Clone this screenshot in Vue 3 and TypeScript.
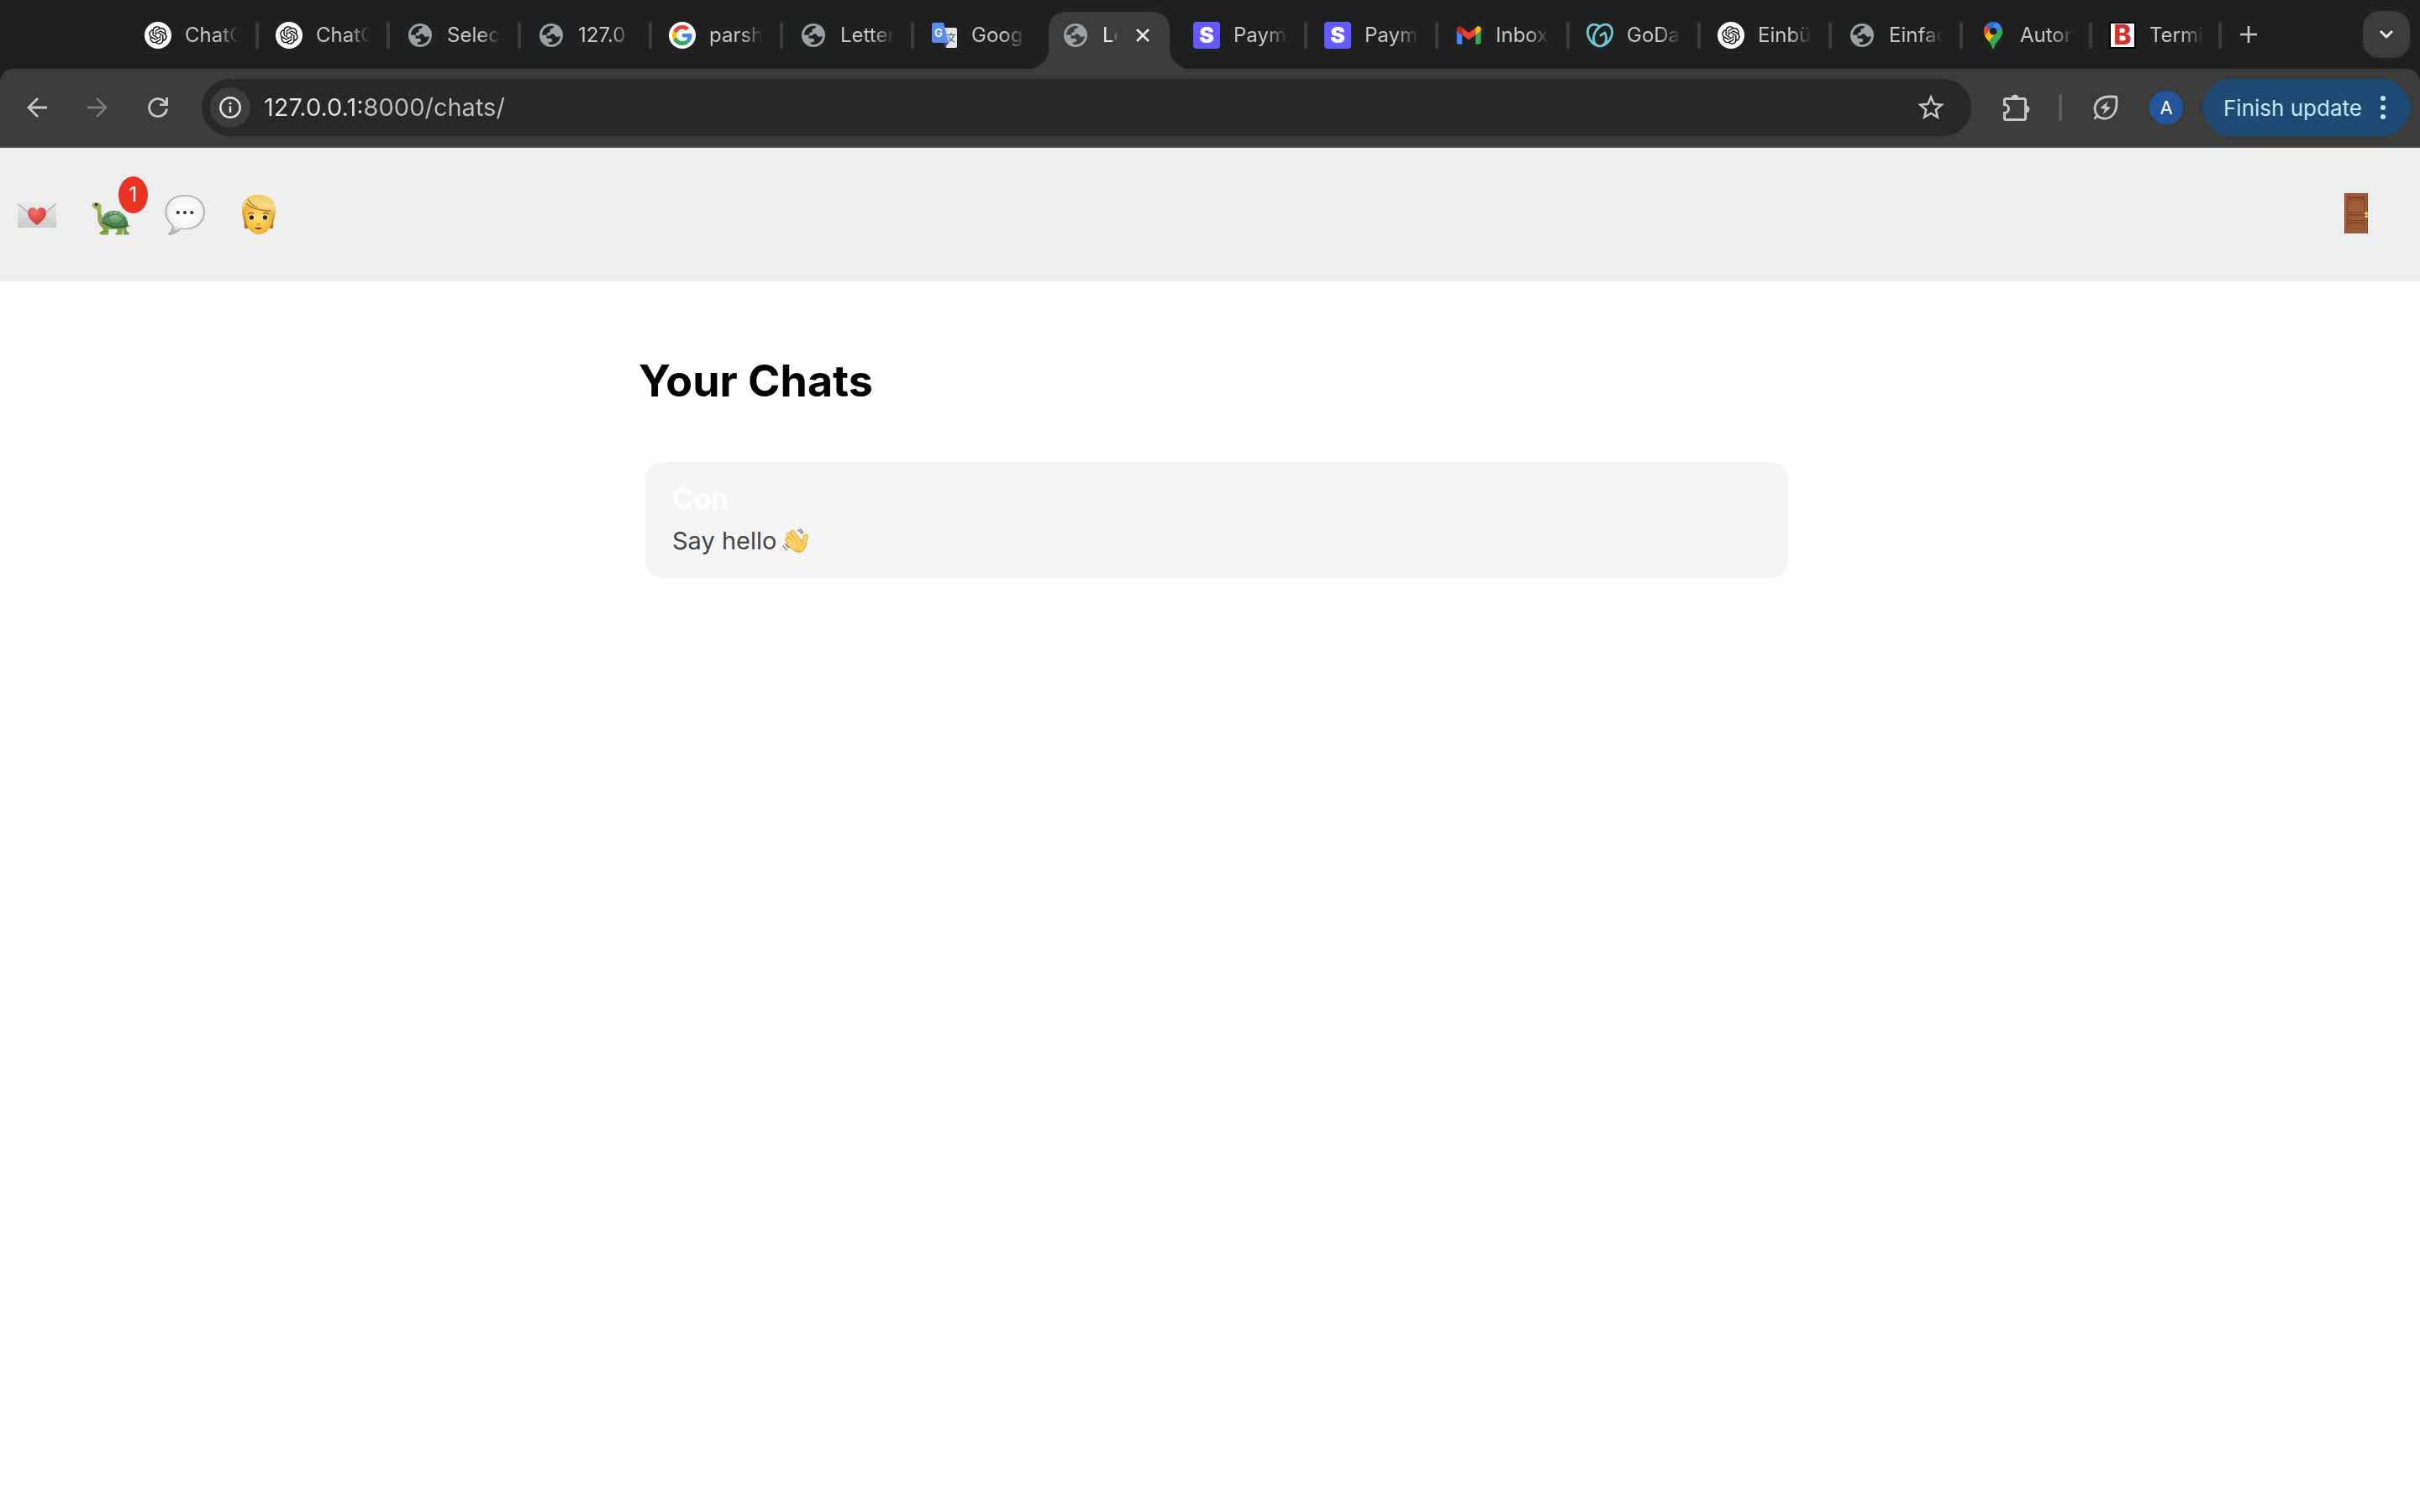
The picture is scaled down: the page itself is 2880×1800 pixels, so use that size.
<script setup lang="ts">
import { ref } from 'vue'

type IconName =
  | 'openai' | 'globe' | 'google' | 'translate' | 'stripe'
  | 'gmail' | 'godaddy' | 'maps' | 'bold'

interface Tab {
  icon: IconName
  label: string
  active?: boolean
  plain?: boolean
  narrow?: boolean
}

const tabs: Tab[] = [
  { icon: 'openai', label: 'ChatG' },
  { icon: 'openai', label: 'ChatG' },
  { icon: 'globe', label: 'Selec' },
  { icon: 'globe', label: '127.0' },
  { icon: 'google', label: 'parsh' },
  { icon: 'globe', label: 'Letter' },
  { icon: 'translate', label: 'Goog', plain: true },
  { icon: 'globe', label: 'Le', active: true, plain: true },
  { icon: 'stripe', label: 'Paym' },
  { icon: 'stripe', label: 'Paym' },
  { icon: 'gmail', label: 'Inbox' },
  { icon: 'godaddy', label: 'GoDa' },
  { icon: 'openai', label: 'Einbü' },
  { icon: 'globe', label: 'Einfac' },
  { icon: 'maps', label: 'Auton', narrow: true },
  { icon: 'bold', label: 'Termi', narrow: true },
]

const address = ref('127.0.0.1:8000/chats/')
const chats = [{ id: 1, name: 'Con', preview: 'Say hello' }]
</script>

<template>
  <div class="window">
    <div class="tab-strip">
      <div class="tabs" role="tablist">
        <button
          v-for="(tab, i) in tabs"
          :key="i"
          type="button"
          role="tab"
          class="tab"
          :class="{ active: tab.active, plain: tab.plain, narrow: tab.narrow }"
          :aria-selected="!!tab.active"
        >
          <svg v-if="tab.icon === 'openai'" class="favicon" viewBox="0 0 32 32">
            <circle cx="16" cy="16" r="16" fill="#fff" />
            <g transform="translate(5.2 5.2) scale(.9)">
              <path fill="#0b0b0b" d="M22.2819 9.8211a5.9847 5.9847 0 0 0-.5157-4.9108 6.0462 6.0462 0 0 0-6.5098-2.9A6.0651 6.0651 0 0 0 4.9807 4.1818a5.9847 5.9847 0 0 0-3.9977 2.9 6.0462 6.0462 0 0 0 .7427 7.0966 5.98 5.98 0 0 0 .511 4.9107 6.051 6.051 0 0 0 6.5146 2.9001A5.9847 5.9847 0 0 0 13.2599 24a6.0557 6.0557 0 0 0 5.7718-4.2058 5.9894 5.9894 0 0 0 3.9977-2.9001 6.0557 6.0557 0 0 0-.7475-7.0729zm-9.022 12.6081a4.4755 4.4755 0 0 1-2.8764-1.0408l.1419-.0804 4.7783-2.7582a.7948.7948 0 0 0 .3927-.6813v-6.7369l2.02 1.1686a.071.071 0 0 1 .038.0615v5.5826a4.504 4.504 0 0 1-4.4945 4.4849zm-9.6607-4.1254a4.4708 4.4708 0 0 1-.5346-3.0137l.142.0852 4.783 2.7582a.7712.7712 0 0 0 .7806 0l5.8428-3.3685v2.3324a.0804.0804 0 0 1-.0332.0615L9.74 19.9502a4.4992 4.4992 0 0 1-6.1408-1.6464zM2.3408 7.8956a4.485 4.485 0 0 1 2.3655-1.9728V11.6a.7664.7664 0 0 0 .3879.6765l5.8144 3.3543-2.0201 1.1685a.0757.0757 0 0 1-.071 0l-4.8303-2.7865A4.504 4.504 0 0 1 2.3408 7.872zm16.5963 3.8558L13.1038 8.364 15.1192 7.2a.0757.0757 0 0 1 .071 0l4.8303 2.7913a4.4944 4.4944 0 0 1-.6765 8.1042v-5.6772a.79.79 0 0 0-.407-.667zm2.0107-3.0231l-.142-.0852-4.7735-2.7818a.7759.7759 0 0 0-.7854 0L9.409 9.2297V6.8974a.0662.0662 0 0 1 .0284-.0615l4.8303-2.7866a4.4992 4.4992 0 0 1 6.6802 4.66zM8.3065 12.863l-2.02-1.1638a.0804.0804 0 0 1-.038-.0567V6.0742a4.4992 4.4992 0 0 1 7.3757-3.4537l-.142.0805L8.704 5.459a.7948.7948 0 0 0-.3927.6813zm1.0976-2.3654l2.602-1.4998 2.6069 1.4998v2.9994l-2.5974 1.4997-2.6067-1.4997Z" />
            </g>
          </svg>

          <svg v-else-if="tab.icon === 'globe'" class="favicon" viewBox="0 0 32 32">
            <circle cx="16" cy="16" r="14" fill="#9aa0a6" />
            <path class="sea" d="M5 15.5C5.2 9.700 9.800 5 16 5c1.200 0 2 .1 3 .4-.3 2-1.600 2.600-3.200 2.800-1.200.2-1.600 1-1.300 2.300.3 1.500-.5 2.200-2 2.200-1.500 0-1.400 1.300-1.200 2.300.1.500-.2.700-.8.700z" />
            <path class="sea" d="M16.200 14.500c1.500-.5 3.600-.2 4.300 1.600.7 1.700 2.300 2.300 4.300 1.500l2.100-.8C26.500 22.500 22 27 16 27c-1.200 0-2.300-.2-3.200-.5v-2.300h2c1.500 0 2.200-.8 2.200-2.200 0-1.600-.9-2.300-2.400-2.300h-2.500c-1.200 0-1.800-.8-1.800-1.800s.6-1.400 1.700-1.400h2.200c1.200 0 1.200-1.600 2-2z" />
          </svg>

          <svg v-else-if="tab.icon === 'google'" class="favicon" viewBox="0 0 32 32">
            <circle cx="16" cy="16" r="16" fill="#fff" />
            <g transform="translate(4 4) scale(.5)">
              <path fill="#ea4335" d="M24 9.500c3.540 0 6.710 1.220 9.210 3.600l6.850-6.850C35.900 2.380 30.470 0 24 0 14.620 0 6.510 5.380 2.560 13.220l7.980 6.190C12.430 13.720 17.740 9.500 24 9.500z" />
              <path fill="#4285f4" d="M46.980 24.550c0-1.570-.15-3.090-.38-4.550H24v9.020h12.940c-.58 2.960-2.260 5.480-4.780 7.180l7.730 6c4.510-4.180 7.090-10.360 7.090-17.650z" />
              <path fill="#fbbc05" d="M10.530 28.590c-.48-1.450-.76-2.990-.76-4.590s.27-3.140.76-4.590l-7.980-6.190C.92 16.460 0 20.120 0 24c0 3.880.92 7.540 2.560 10.780l7.970-6.190z" />
              <path fill="#34a853" d="M24 48c6.480 0 11.930-2.130 15.890-5.810l-7.730-6c-2.150 1.450-4.920 2.300-8.160 2.300-6.260 0-11.570-4.220-13.470-9.910l-7.980 6.190C6.510 42.620 14.620 48 24 48z" />
            </g>
          </svg>

          <svg v-else-if="tab.icon === 'translate'" class="favicon" viewBox="0 0 32 32">
            <path fill="#e3e5e8" d="M14 7h15a2 2 0 0 1 2 2v20a2 2 0 0 1-2 2H18z" />
            <path fill="none" stroke="#607d8b" stroke-width="1.500" d="M19 15.500h10M24 13v2.500M27 15.500c-.6 3.800-3.500 6.700-6.500 8.500M21 17.500c1 2.700 3.800 5 7 6.500" />
            <path fill="#3949ab" d="M15.500 25H21l-5 6z" />
            <path fill="#5b8def" d="M3 1h12l6 24H3a2 2 0 0 1-2-2V3a2 2 0 0 1 2-2z" />
            <text x="4" y="17.500" fill="#fff" font-family="Inter, sans-serif" font-size="13" font-weight="600">G</text>
          </svg>

          <span v-else-if="tab.icon === 'stripe'" class="favicon stripe">S</span>

          <svg v-else-if="tab.icon === 'gmail'" class="favicon" viewBox="0 0 32 32">
            <g transform="translate(-15.300 -8.500) scale(.327)">
              <path fill="#4285f4" d="M58 108h14V74L52 59v43c0 3.320 2.690 6 6 6" />
              <path fill="#34a853" d="M120 108h14c3.320 0 6-2.690 6-6V59l-20 15" />
              <path fill="#fbbc04" d="M120 48v26l20-15v-8c0-7.420-8.470-11.650-14.400-7.200" />
              <path fill="#ea4335" d="M72 74V48l24 18 24-18v26L96 92" />
              <path fill="#c5221f" d="M52 51v8l20 15V48l-5.600-4.200c-5.940-4.450-14.400-.22-14.400 7.200" />
            </g>
          </svg>

          <svg v-else-if="tab.icon === 'godaddy'" class="favicon" viewBox="0 0 24 24">
            <path fill="#6fc6cf" d="M20.702 2.290c-2.494-1.554-5.778-1.187-8.706.654C9.076 1.104 5.790.736 3.300 2.290c-3.941 2.463-4.420 8.806-1.070 14.167 2.470 3.954 6.333 6.269 9.770 6.226 3.439.043 7.301-2.273 9.771-6.226 3.347-5.361 2.872-11.704-1.069-14.167zM4.042 15.328a12.838 12.838 0 0 1-1.546-3.541 10.120 10.120 0 0 1-.336-3.338c.15-1.980.956-3.524 2.270-4.345 1.315-.822 3.052-.87 4.903-.137.281.113.556.24.825.382A15.110 15.110 0 0 0 7.500 7.540c-2.035 3.255-2.655 6.878-1.945 9.765a13.247 13.247 0 0 1-1.514-1.980zm17.465-3.541a12.866 12.866 0 0 1-1.547 3.540 13.250 13.250 0 0 1-1.513 1.984c.635-2.589.203-5.760-1.353-8.734a.39.39 0 0 0-.563-.153l-4.852 3.032a.397.397 0 0 0-.126.546l.712 1.139a.395.395 0 0 0 .547.126l3.145-1.965c.101.306.203.606.28.916.296 1.086.41 2.214.335 3.337-.15 1.982-.956 3.525-2.270 4.347a4.437 4.437 0 0 1-2.250.65h-.101a4.432 4.432 0 0 1-2.250-.65c-1.314-.822-2.121-2.365-2.270-4.347-.074-1.123.039-2.251.335-3.337a13.212 13.212 0 0 1 4.050-6.482 10.148 10.148 0 0 1 2.849-1.765c1.845-.733 3.586-.685 4.900.137 1.316.822 2.122 2.365 2.271 4.345a10.146 10.146 0 0 1-.33 3.334z" />
          </svg>

          <svg v-else-if="tab.icon === 'maps'" class="favicon" viewBox="-20 0 132.300 132.300">
            <path fill="#1a73e8" d="M60.200 2.200C55.800.8 51 0 46.100 0 32 0 19.300 6.400 10.800 16.500l21.800 18.300L60.200 2.200z" />
            <path fill="#ea4335" d="M10.800 16.500C4.100 24.500 0 34.900 0 46.100c0 8.700 1.700 15.700 4.600 22l28-33.300-21.800-18.300z" />
            <path fill="#4285f4" d="M46.200 28.500c9.800 0 17.700 7.900 17.700 17.700 0 4.300-1.600 8.300-4.200 11.400 0 0 13.900-16.600 27.500-32.700-5.600-10.800-15.300-19-27-22.700L32.600 34.800c3.300-3.800 8.100-6.300 13.600-6.300" />
            <path fill="#fbbc04" d="M46.200 63.800c-9.800 0-17.700-7.900-17.700-17.700 0-4.300 1.500-8.300 4.100-11.300l-28 33.300c4.800 10.600 12.800 19.200 21 29.900l34.100-40.500c-3.300 3.900-8.100 6.300-13.500 6.300" />
            <path fill="#34a853" d="M59.100 109.200c15.400-24.100 33.300-35 33.300-63 0-7.700-1.900-14.900-5.200-21.300L25.600 98c2.600 3.400 5.300 7.300 7.900 11.300 9.400 14.500 6.800 23.100 12.800 23.100s3.400-8.700 12.800-23.200" />
          </svg>

          <span v-else class="favicon bold">B</span>

          <span class="tab-label">{{ tab.label }}</span>
          <svg v-if="tab.active" class="tab-close" viewBox="0 0 16 16">
            <path d="M1 1l14 14M15 1L1 15" stroke="#e8e8e8" stroke-width="2.600" />
          </svg>
        </button>
      </div>
      <button type="button" class="new-tab" aria-label="New tab">
        <svg viewBox="0 0 20 20"><path d="M10 0v20M0 10h20" stroke="#c9c9c9" stroke-width="2.600" /></svg>
      </button>
      <button type="button" class="tab-search" aria-label="Search tabs">
        <svg viewBox="0 0 16 12"><path d="M1 2l7 7 7-7" fill="none" stroke="#e8e8e8" stroke-width="3" /></svg>
      </button>
    </div>

    <div class="toolbar-frame">
    <div class="toolbar">
      <button type="button" class="tool" aria-label="Back">
        <svg viewBox="0 0 24 24" class="line"><path d="M24 12H2M13 1L2 12l11 11" /></svg>
      </button>
      <button type="button" class="tool dim" aria-label="Forward">
        <svg viewBox="0 0 24 24" class="line"><path d="M0 12h22M11 1l11 11-11 11" /></svg>
      </button>
      <button type="button" class="tool" aria-label="Reload">
        <svg viewBox="0 0 24 24" class="line"><path d="M22.500 13.500A10.500 10.500 0 1 1 19.500 4.700L22.500 8M22.600 0v8.600H14" /></svg>
      </button>
      <div class="omnibox">
        <button type="button" class="site-info" aria-label="View site information">
          <svg viewBox="0 0 26 26">
            <circle cx="13" cy="13" r="11.700" fill="none" stroke="#e3e3e3" stroke-width="2.500" />
            <path d="M13 11.500V19" stroke="#e3e3e3" stroke-width="2.500" />
            <circle cx="13" cy="8" r="1.600" fill="#e3e3e3" />
          </svg>
        </button>
        <input v-model="address" class="address" type="text" aria-label="Address" />
        <button type="button" class="star" aria-label="Bookmark this tab">
          <svg viewBox="0 0 24 24"><path fill="#c7c7c7" d="M22 9.240l-7.190-.62L12 2 9.190 8.630 2 9.240l5.460 4.730L5.820 21 12 17.270 18.180 21l-1.630-7.030L22 9.240zM12 15.400l-3.760 2.270 1-4.280-3.320-2.880 4.380-.38L12 6.100l1.710 4.040 4.380.38-3.320 2.880 1 4.280L12 15.400z" /></svg>
        </button>
      </div>
      <button type="button" class="extensions" aria-label="Extensions">
        <svg viewBox="0 0 32 32">
          <path d="M1.500 12.500V7a1.500 1.500 0 0 1 1.500-1.500H25A1.500 1.500 0 0 1 26.500 7V29a1.500 1.500 0 0 1-1.500 1.500H3A1.500 1.500 0 0 1 1.500 29v-6.500a5 5 0 0 0 0-10z" fill="none" stroke="#c7c7c7" stroke-width="3" />
          <path d="M10 5a4 4 0 0 1 8 0zM27 14a4 4 0 0 1 0 8z" fill="#c7c7c7" stroke="#c7c7c7" />
        </svg>
      </button>
      <span class="divider"></span>
      <button type="button" class="energy" aria-label="Energy saver">
        <svg viewBox="0 0 30 30">
          <path d="M5 24.500C-1 17 2 2 20 2c3 0 6 0 7.500.3C28.500 10 28 18 24 23c-5 6.500-14 6.500-19 1.500zM5.500 24L1.500 28.500" fill="none" stroke="#c7c7c7" stroke-width="2.800" />
          <path d="M18 7.500L8.500 15.500l5.500 1.500-2.500 6.500 9.500-8.500-5.500-1.500z" fill="#c7c7c7" />
        </svg>
      </button>
      <button type="button" class="avatar" aria-label="Profile A">A</button>
      <button type="button" class="update">
        <span>Finish update</span>
        <svg viewBox="0 0 6 28"><g fill="#c2e7ff"><circle cx="3" cy="3" r="3" /><circle cx="3" cy="14" r="3" /><circle cx="3" cy="25" r="3" /></g></svg>
      </button>
    </div>
    </div>

    <header class="site-nav">
      <nav class="links">
        <a href="#letters" aria-label="Letters">
          <svg viewBox="0 0 48 48">
            <defs>
              <linearGradient id="env" x1="0" y1="0" x2="0" y2="1"><stop offset="0" stop-color="#ececec" /><stop offset="1" stop-color="#cbcbcb" /></linearGradient>
              <radialGradient id="heart" cx=".4" cy=".25" r=".8"><stop offset="0" stop-color="#f4716a" /><stop offset="1" stop-color="#d3302f" /></radialGradient>
            </defs>
            <rect x="1" y="9.500" width="46" height="29.500" rx="1" fill="url(#env)" />
            <path d="M1.500 38.500L17 24M46.500 38.500L31 24" stroke="#bdbdbd" fill="none" />
            <path d="M1.500 10.500L20 27q4 3 8 0L46.500 10.500" stroke="#a9adb0" stroke-width="1.200" fill="none" />
            <path d="M24 36C18 31.500 13 27.500 13 21.500c0-6.500 8-8.500 11-3 3-5.500 11-3.500 11 3C35 27.500 30 31.500 24 36z" fill="url(#heart)" stroke="#b9b0b0" stroke-width=".5" />
          </svg>
        </a>
        <a href="#turtle" class="with-badge" aria-label="Turtle, 1 new">
          <svg viewBox="0 0 48 48">
            <defs>
              <radialGradient id="shell" cx=".5" cy=".25" r=".8"><stop offset="0" stop-color="#8fc48d" /><stop offset="1" stop-color="#34693f" /></radialGradient>
              <linearGradient id="skin" x1="0" y1="0" x2="0" y2="1"><stop offset="0" stop-color="#a9b75c" /><stop offset="1" stop-color="#7d9a44" /></linearGradient>
            </defs>
            <path d="M14 34l.5 9c-2 0-4.500 1.500-4 3.500l3 1h7c1.500-3 .5-7 1-11zM30 37l2 7c-1.500 .5-3 1.500-2.500 3.500h7.500c1.500-3 .5-7 .5-11zM37 36l2 7.500v4h6.500c1.500-2-.5-3.500-2.500-4l-1-7z" fill="#7fa045" />
            <path d="M40 35c3 1 5 2 7.500 1-1 2-3 3-7 2z" fill="#8fa84e" />
            <path d="M1.500 12.500C1 9.500 4 9 7 9c4 0 6 3 5.500 7-.4 4 0 9 3 13l22 6c0 4-6 6-13 6-9 0-15-3-16-11C8 24.500 8.500 20.500 7 17 5 16.500 2 15.500 1.500 12.500z" fill="url(#skin)" />
            <path d="M13.500 33C13 23 20 18.500 28 18.700 37 19 43 25 44.500 35c.3 2-1 3-3 3.500-9 3-20 1-28-5.500z" fill="url(#shell)" />
            <path d="M14 32.500c8 6 19 8 29.500 4" fill="none" stroke="#2d5a38" stroke-width="1.400" />
            <path d="M22 21l-2 5-5 2M20 26l4 8-2 3M24 34l9 1 6-7-7-5-7 1-5 2M25 24l3-5M32 23l2-3.500M39 28l3-1M33 35l0 4M39 28l3 9" fill="none" stroke="#3a6f46" />
            <circle cx="6.500" cy="11.500" r="1.700" fill="#1d1d12" />
          </svg>
          <span class="badge">1</span>
        </a>
        <a href="#chats" aria-label="Chats">
          <svg viewBox="0 0 48 48">
            <defs>
              <radialGradient id="bub" cx=".5" cy=".42" r=".56"><stop offset="0" stop-color="#fff" /><stop offset=".75" stop-color="#f4f4f4" /><stop offset="1" stop-color="#b8b8b8" /></radialGradient>
            </defs>
            <path d="M24 .8C11 .8 1.200 8 1.200 20.500c0 7 3.300 12 8 15.500.5 4-1.500 8-4.200 10.500 0 .6.500.8 1 .7C12 46.500 16 43.500 18.500 40c1.700.4 3.500.5 5.500.5 13 0 23.200-7.500 23.200-20S37 .8 24 .8z" fill="url(#bub)" stroke="#a0a0a0" stroke-width="1.200" />
            <g fill="#333"><circle cx="15.800" cy="21" r="2.100" /><circle cx="24" cy="21" r="2.100" /><circle cx="32.300" cy="21" r="2.100" /></g>
          </svg>
        </a>
        <a href="#profile" aria-label="Profile">
          <svg viewBox="0 0 48 48">
            <defs>
              <linearGradient id="hair" x1="0" y1="0" x2="0" y2="1"><stop offset="0" stop-color="#f0ca62" /><stop offset=".6" stop-color="#dca63a" /><stop offset="1" stop-color="#a87424" /></linearGradient>
              <linearGradient id="fringe" x1="0" y1="0" x2="0" y2="1"><stop offset="0" stop-color="#f2cb60" /><stop offset=".5" stop-color="#f8dc8c" /><stop offset="1" stop-color="#dba438" /></linearGradient>
              <radialGradient id="face" cx=".5" cy=".4" r=".6"><stop offset="0" stop-color="#ffdf6b" /><stop offset="1" stop-color="#f0b232" /></radialGradient>
            </defs>
            <path d="M23 0C9 0 3 9 4 21c.3 4 1.800 7 2.300 11L7 40h4L24 30l13 10h4l.4-8c.6-4 2.400-7 2.400-12C44 7 36 0 23 0z" fill="url(#hair)" />
            <path d="M8 24c-.5-5 1-9 2-12 8 3 20 6 28 6 1.500 2 2 4 2 7 0 13-6 22-16 22S8.500 37 8 24z" fill="url(#face)" />
            <path d="M5 24c0-6 1-10 4-14 5 5 14 9 29 9 1 2 2 4 2.300 8 3.500-4 4.500-14 .7-19C37 3 31 0 23 0 10 0 3 9 5 24z" fill="url(#fringe)" />
            <path d="M9 10c5 5 14 9 29 9M11 5c2 4 5 8 12 10" fill="none" stroke="#a97422" stroke-width="1.300" />
            <path d="M11 23q3-3 7-1M29 22q4-2 7 1" fill="none" stroke="#9a6a1e" stroke-width="1.500" />
            <ellipse cx="15.300" cy="27" rx="3.800" ry="3.300" fill="#fff" /><ellipse cx="31.500" cy="27" rx="3.800" ry="3.300" fill="#fff" />
            <circle cx="15.300" cy="27" r="2.800" fill="#3c230f" /><circle cx="31.500" cy="27" r="2.800" fill="#3c230f" />
            <path d="M21.500 34q2 1.500 4 0" fill="none" stroke="#c98320" stroke-width="1.300" />
            <path d="M19 39.500q4.500-1.500 9 0-4.500 3.500-9 0z" fill="#7d2f12" />
          </svg>
        </a>
      </nav>
      <a href="#logout" aria-label="Log out">
        <svg viewBox="0 2 48 48">
          <defs><linearGradient id="panel" x1="0" y1="0" x2="0" y2="1"><stop offset="0" stop-color="#7c4428" /><stop offset=".3" stop-color="#9a5a38" /><stop offset="1" stop-color="#a3603d" /></linearGradient></defs>
          <rect x="10" width="28" height="47.500" fill="#a05c3a" />
          <path d="M10.500 0v47.500M37.500 0v47.500M10 .5h28M10 47h28" stroke="#7f4529" />
          <rect x="14" y="4.500" width="20" height="18" fill="url(#panel)" stroke="#7c4428" />
          <rect x="14" y="25.500" width="20" height="7" fill="url(#panel)" stroke="#7c4428" />
          <rect x="14" y="35" width="20" height="7" fill="url(#panel)" stroke="#7c4428" />
          <path d="M34.500 22.500h3.500v3h-3.500zM34.500 26.500h3.500v2.500h-3.500z" fill="#f0d44c" />
        </svg>
      </a>
    </header>

    <main class="page">
      <h1>Your Chats</h1>
      <ul class="chat-list">
        <li v-for="chat in chats" :key="chat.id">
          <a class="chat" href="#chat">
            <strong>{{ chat.name }}</strong>
            <span class="preview">{{ chat.preview }}
              <svg viewBox="0 0 30 30" role="img" aria-label="waving hand">
                <g stroke="#e0a238" stroke-width="5.400" stroke-linecap="round" fill="none">
                  <path d="M11 4.800L19 15M6.500 7.500L16 18M5 13L14 21M6.500 19L15 24M27 9.500L24.500 18" />
                </g>
                <path d="M12 17l8-6 4 4.500 4-4.500c1 9-1 13-3.500 15.500-4 4-9 3-12.500-.5z" fill="#eeb446" />
                <g stroke="#ffd468" stroke-width="3.600" stroke-linecap="round" fill="none">
                  <path d="M11 4.800L19 15M6.500 7.500L16 18M5 13L14 21M6.500 19L15 24M27 9.500L24.500 18" />
                </g>
                <path d="M14 19l6-5 4 4 2-2c0 5-1 8-3 9.500-3 3-6 2-9-1z" fill="#fbca5c" />
                <path d="M17 2q4 1 5 5M19.500.5q3.500 2 4 5.500M0 20q1 4 5 6M2.500 18q1 3 4.500 5" stroke="#6b6b6b" stroke-width="1.100" fill="none" />
              </svg>
            </span>
          </a>
        </li>
      </ul>
    </main>
  </div>
</template>

<style>
body {
  background: #fff;
}
</style>

<style scoped>
.window {
  font-family: Inter, 'Liberation Sans', sans-serif;
  min-height: 100vh;
  background: #fff;
  overflow: hidden;
}
button {
  padding: 0;
  border: 0;
  background: none;
  font: inherit;
  color: inherit;
}
svg {
  display: block;
}

/* Tab strip */
.tab-strip {
  display: flex;
  align-items: center;
  height: 82px;
  padding: 0 12px 0 152px;
  background: #1f2120;
}
.tabs {
  display: flex;
}
.tab {
  position: relative;
  display: flex;
  align-items: center;
  gap: 16px;
  box-sizing: border-box;
  width: 156px;
  height: 82px;
  padding: 2px 0 0 20px;
  color: #c7c7c7;
  font-size: 24px;
  line-height: 32px;
}
.tab.narrow {
  width: 154px;
}
.tab::after {
  content: '';
  width: 4px;
  height: 32px;
  margin-left: auto;
  border-radius: 2px;
  background: #3c3c3c;
}
.tab.plain::after {
  visibility: hidden;
}
.favicon {
  flex: none;
  width: 32px;
  height: 32px;
}
.sea {
  fill: #1f2120;
}
.active .sea {
  fill: #3c3c3c;
}
.stripe {
  border-radius: 4px;
  background: #635bff;
  color: #fff;
  font-weight: 900;
  font-size: 26px;
  text-align: center;
}
.bold {
  box-sizing: border-box;
  border: 2px solid #000;
  background: #fff;
  color: #d32f2f;
  font-weight: 800;
  font-size: 32px;
  line-height: 28px;
  text-align: center;
}
.tab-label {
  flex: none;
  width: 64px;
  overflow: hidden;
  white-space: nowrap;
  text-align: left;
  -webkit-mask-image: linear-gradient(90deg, #000 60%, transparent);
  mask-image: linear-gradient(90deg, #000 60%, transparent);
}
.active {
  z-index: 1;
  color: #e8e8e8;
}
.active::before {
  content: '';
  position: absolute;
  z-index: -1;
  inset: 14px -16px 0 -20px;
  background:
    radial-gradient(circle at 0 0, transparent 24px, #3c3c3c 24px) 0 100% / 24px 24px no-repeat,
    radial-gradient(circle at 100% 0, transparent 24px, #3c3c3c 24px) 100% 100% / 24px 24px no-repeat;
}
.active::after {
  position: absolute;
  z-index: -2;
  inset: 14px 8px 0 4px;
  width: auto;
  height: auto;
  border-radius: 20px 20px 0 0;
}
.tab.active::after {
  visibility: visible;
}
.active .tab-label {
  width: 18px;
}
.tab-close {
  width: 16px;
  height: 16px;
  margin-left: 6px;
}
.new-tab {
  width: 64px;
  height: 56px;
  display: grid;
  place-items: center;
}
.new-tab svg {
  width: 20px;
  height: 20px;
}
.tab-search {
  display: grid;
  place-items: center;
  width: 56px;
  height: 56px;
  margin-left: auto;
  border-radius: 20px;
  background: #3c3c3c;
}
.tab-search svg {
  width: 16px;
  height: 12px;
}

/* Toolbar */
.toolbar-frame {
  background: #1f2120;
}
.toolbar {
  display: flex;
  align-items: center;
  box-sizing: border-box;
  height: 94px;
  padding: 0 12px 0 8px;
  border-bottom: 2px solid #4a4a4a;
  border-radius: 16px 16px 0 0;
  background: #3c3c3c;
}
.tool {
  display: grid;
  place-items: center;
  width: 72px;
  height: 68px;
}
.tool svg {
  width: 24px;
  height: 24px;
  overflow: visible;
}
.line {
  fill: none;
  stroke: #c7c7c7;
  stroke-width: 2.800;
}
.dim .line {
  stroke: #7a7a7a;
}
.omnibox {
  display: flex;
  flex: 1;
  align-items: center;
  box-sizing: border-box;
  height: 68px;
  margin-left: 16px;
  padding: 0 29px 0 10px;
  border-radius: 34px;
  background: #282828;
}
.site-info {
  display: grid;
  place-items: center;
  width: 48px;
  height: 48px;
  border-radius: 50%;
  background: #3c3c3c;
}
.site-info svg {
  width: 26px;
  height: 26px;
}
.address {
  flex: 1;
  min-width: 0;
  padding: 0;
  margin-left: 16px;
  border: 0;
  outline: 0;
  font: 29px/36px Inter, 'Liberation Sans', sans-serif;
  color: transparent;
  background: linear-gradient(90deg, #e3e3e3 119px, #c0c0c0 119px);
  -webkit-background-clip: text;
  background-clip: text;
}
.star svg {
  width: 38px;
  height: 38px;
}
.extensions {
  margin-left: 38px;
}
.extensions svg {
  width: 32px;
  height: 32px;
}
.divider {
  width: 4px;
  height: 32px;
  margin-left: 34px;
  border-radius: 2px;
  background: #5e5e5e;
}
.energy {
  margin-left: 37px;
}
.energy svg {
  width: 30px;
  height: 30px;
}
.avatar {
  width: 40px;
  height: 40px;
  margin-left: 37px;
  border-radius: 50%;
  background: #22559a;
  color: #fff;
  font-size: 22px;
}
.update {
  display: flex;
  align-items: center;
  justify-content: space-between;
  box-sizing: border-box;
  width: 246px;
  height: 68px;
  margin-left: 24px;
  padding: 0 29px 0 24px;
  border-radius: 34px;
  background: #1f4a73;
  color: #c2e7ff;
  font-size: 26px;
}
.update svg {
  width: 6px;
  height: 28px;
}

/* Site navigation */
.site-nav {
  display: flex;
  justify-content: space-between;
  padding: 56px 52px 55px 20px;
  background: #eee;
}
.links {
  display: flex;
  gap: 40px;
}
.site-nav svg {
  width: 48px;
  height: 48px;
  overflow: visible;
}
.with-badge {
  position: relative;
}
.badge {
  position: absolute;
  top: -22px;
  left: 33px;
  width: 35px;
  height: 44px;
  border-radius: 50%;
  background: #eb3323;
  color: #fff;
  font-size: 24px;
  line-height: 44px;
  text-align: center;
}
a {
  color: inherit;
  text-decoration: none;
}

/* Chats page */
.page {
  box-sizing: border-box;
  max-width: 1376px;
  margin: 0 auto;
  padding: 87px 0 64px 8px;
}
h1 {
  margin: 0;
  color: #000;
  font-size: 52px;
  font-weight: 700;
  line-height: 64px;
}
.chat-list {
  margin: 64px 0 0 8px;
  padding: 0;
  list-style: none;
}
.chat {
  display: flex;
  flex-direction: column;
  gap: 10px;
  padding: 24px 32px;
  border-radius: 20px;
  background: #f5f5f5;
}
.chat strong {
  color: #fff;
  font-size: 34px;
  font-weight: 700;
  line-height: 40px;
}
.preview {
  display: flex;
  align-items: center;
  gap: 8px;
  color: #444;
  font-size: 29px;
  line-height: 40px;
}
.preview svg {
  width: 30px;
  height: 30px;
}
</style>
